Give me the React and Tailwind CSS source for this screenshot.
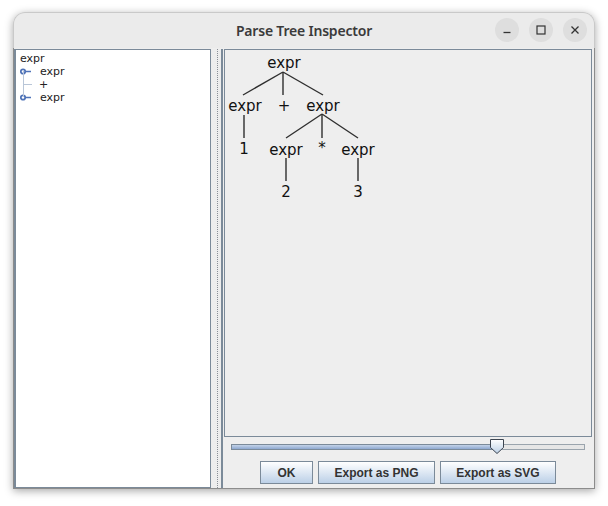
const TREE_FONT = { fontFamily: '"DejaVu Sans", sans-serif' };

function WinButton({ children }) {
  return (
    <div className="w-[24px] h-[24px] rounded-full bg-[#dedede] flex items-center justify-center">
      {children}
    </div>
  );
}

function TitleBar() {
  return (
    <div className="relative h-[36px] bg-[#ebebeb] rounded-t-[12px] border-t border-x border-[#c9c9c9] flex items-center justify-center">
      <span className="text-[14px] font-semibold text-[#3a3a3a] font-['Noto_Sans',sans-serif] tracking-[-0.2px]">
        Parse Tree Inspector
      </span>
      <div className="absolute right-[7px] top-[5px] flex gap-[10px]">
        <WinButton>
          <svg width="10" height="10" viewBox="0 0 10 10"><path d="M1.5 7.5h7" stroke="#333" strokeWidth="1.3" /></svg>
        </WinButton>
        <WinButton>
          <svg width="10" height="10" viewBox="0 0 10 10"><rect x="1" y="1" width="8" height="8" fill="none" stroke="#333" strokeWidth="1.2" /></svg>
        </WinButton>
        <WinButton>
          <svg width="10" height="10" viewBox="0 0 10 10"><path d="M1.5 1.5l7 7M8.5 1.5l-7 7" stroke="#333" strokeWidth="1.3" /></svg>
        </WinButton>
      </div>
    </div>
  );
}

function KeyIcon() {
  return (
    <svg width="14" height="8" viewBox="0 0 14 8" className="shrink-0">
      <circle cx="3" cy="3.5" r="2.2" fill="none" stroke="#4f73b8" strokeWidth="1.8" />
      <path d="M5 3.5h6" stroke="#4f73b8" strokeWidth="1.5" />
    </svg>
  );
}

function LeftTree() {
  return (
    <div className="w-[199px] bg-white border border-l-2 border-[#7b8a99] pt-[2px] pl-[4px] text-[11px] leading-[13px] text-[#222]" style={TREE_FONT}>
      <div className="h-[13px]">expr</div>
      <div className="relative">
        <div className="absolute left-[3px] top-[6px] w-px h-[26px] bg-[#b9c6d8]" />
        <div className="absolute left-[3px] top-[19px] w-[9px] h-px bg-[#b9c6d8]" />
        <div className="h-[13px] flex items-center">
          <KeyIcon />
          <span className="ml-[6px]">expr</span>
        </div>
        <div className="h-[13px] flex items-center pl-[19px]">+</div>
        <div className="h-[13px] flex items-center">
          <KeyIcon />
          <span className="ml-[6px]">expr</span>
        </div>
      </div>
    </div>
  );
}

function Divider() {
  return (
    <div className="w-[10px] flex justify-center bg-[#ededed]">
      <div className="w-0 ml-[2px] border-l border-dotted border-[#8a8f96]" />
    </div>
  );
}

function ParseTree() {
  const lines = [
    [283, 72, 243, 95],
    [283, 72, 283, 95],
    [283, 72, 323, 95],
    [244, 115, 244, 138],
    [322, 114, 286, 138],
    [322, 114, 322, 138],
    [322, 114, 358, 138],
    [286, 158, 286, 181],
    [358, 158, 358, 181],
  ];
  const labels = [
    [284, 63, 'expr'],
    [245, 106, 'expr'],
    [284, 106, '+'],
    [323, 106, 'expr'],
    [244, 149, '1'],
    [286, 150, 'expr'],
    [322, 148, '*'],
    [358, 150, 'expr'],
    [286, 192, '2'],
    [358, 192, '3'],
  ];
  return (
    <svg width="366" height="386" viewBox="225 50 366 386" className="block">
      {lines.map(([x1, y1, x2, y2], i) => (
        <line key={i} x1={x1} y1={y1} x2={x2} y2={y2} stroke="#2e2e2e" strokeWidth="1.4" />
      ))}
      {labels.map(([x, y, t], i) => (
        <text
          key={i}
          x={x}
          y={y}
          textAnchor="middle"
          dominantBaseline="central"
          fontSize="15"
          fill="#111"
          style={TREE_FONT}
        >
          {t}
        </text>
      ))}
    </svg>
  );
}

function Slider() {
  return (
    <div className="relative mx-[7px] h-[16px] flex items-center">
      <div className="flex w-full h-[6px]">
        <div className="w-[263px] h-full border border-[#7b8a99] bg-gradient-to-b from-[#c4d3e8] to-[#8ea8d0]" />
        <div className="flex-1 h-full border-y border-r border-[#9aa4ad] bg-[#e6e6e6]" />
      </div>
      <svg width="17" height="17" viewBox="0 0 17 17" className="absolute left-[258px] top-[-1px]">
        <defs>
          <linearGradient id="th" x1="0" y1="0" x2="0" y2="1">
            <stop offset="0" stopColor="#ffffff" />
            <stop offset="1" stopColor="#bcd0e6" />
          </linearGradient>
        </defs>
        <path d="M1.5 1.5h13v8l-6.5 6-6.5-6z" fill="url(#th)" stroke="#3d4550" strokeWidth="1" strokeLinejoin="round" />
      </svg>
    </div>
  );
}

function Btn({ w, children }) {
  return (
    <button
      className={`${w} h-[23px] border border-[#7b8a99] bg-gradient-to-b from-[#ffffff] to-[#bcd0e7] text-[12px] font-bold text-[#333] font-['Liberation_Sans',Arial,sans-serif]`}
    >
      {children}
    </button>
  );
}

export default function App() {
  return (
    <div className="w-[608px] h-[506px] bg-white pt-[12px] pl-[13px] overflow-hidden">
      <div className="w-[582px] h-[477px] flex flex-col rounded-t-[12px] shadow-[0_2px_9px_rgba(0,0,0,0.35)]">
        <TitleBar />
        <div className="flex-1 flex bg-[#eeeeee] border-x border-b border-[#8c8c8c] pt-[1px]">
          <LeftTree />
          <Divider />
          <div className="flex-1 flex flex-col border-l-2 border-[#7b8a99] pl-[1px] pr-[2px]">
            <div className="h-[388px] border border-[#7b8a99] bg-[#eeeeee] overflow-hidden">
              <ParseTree />
            </div>
            <div className="mt-[2px]">
              <Slider />
            </div>
            <div className="mt-[6px] flex justify-center gap-[5px]">
              <Btn w="w-[53px]">OK</Btn>
              <Btn w="w-[117px]">Export as PNG</Btn>
              <Btn w="w-[116px]">Export as SVG</Btn>
            </div>
          </div>
        </div>
      </div>
    </div>
  );
}
